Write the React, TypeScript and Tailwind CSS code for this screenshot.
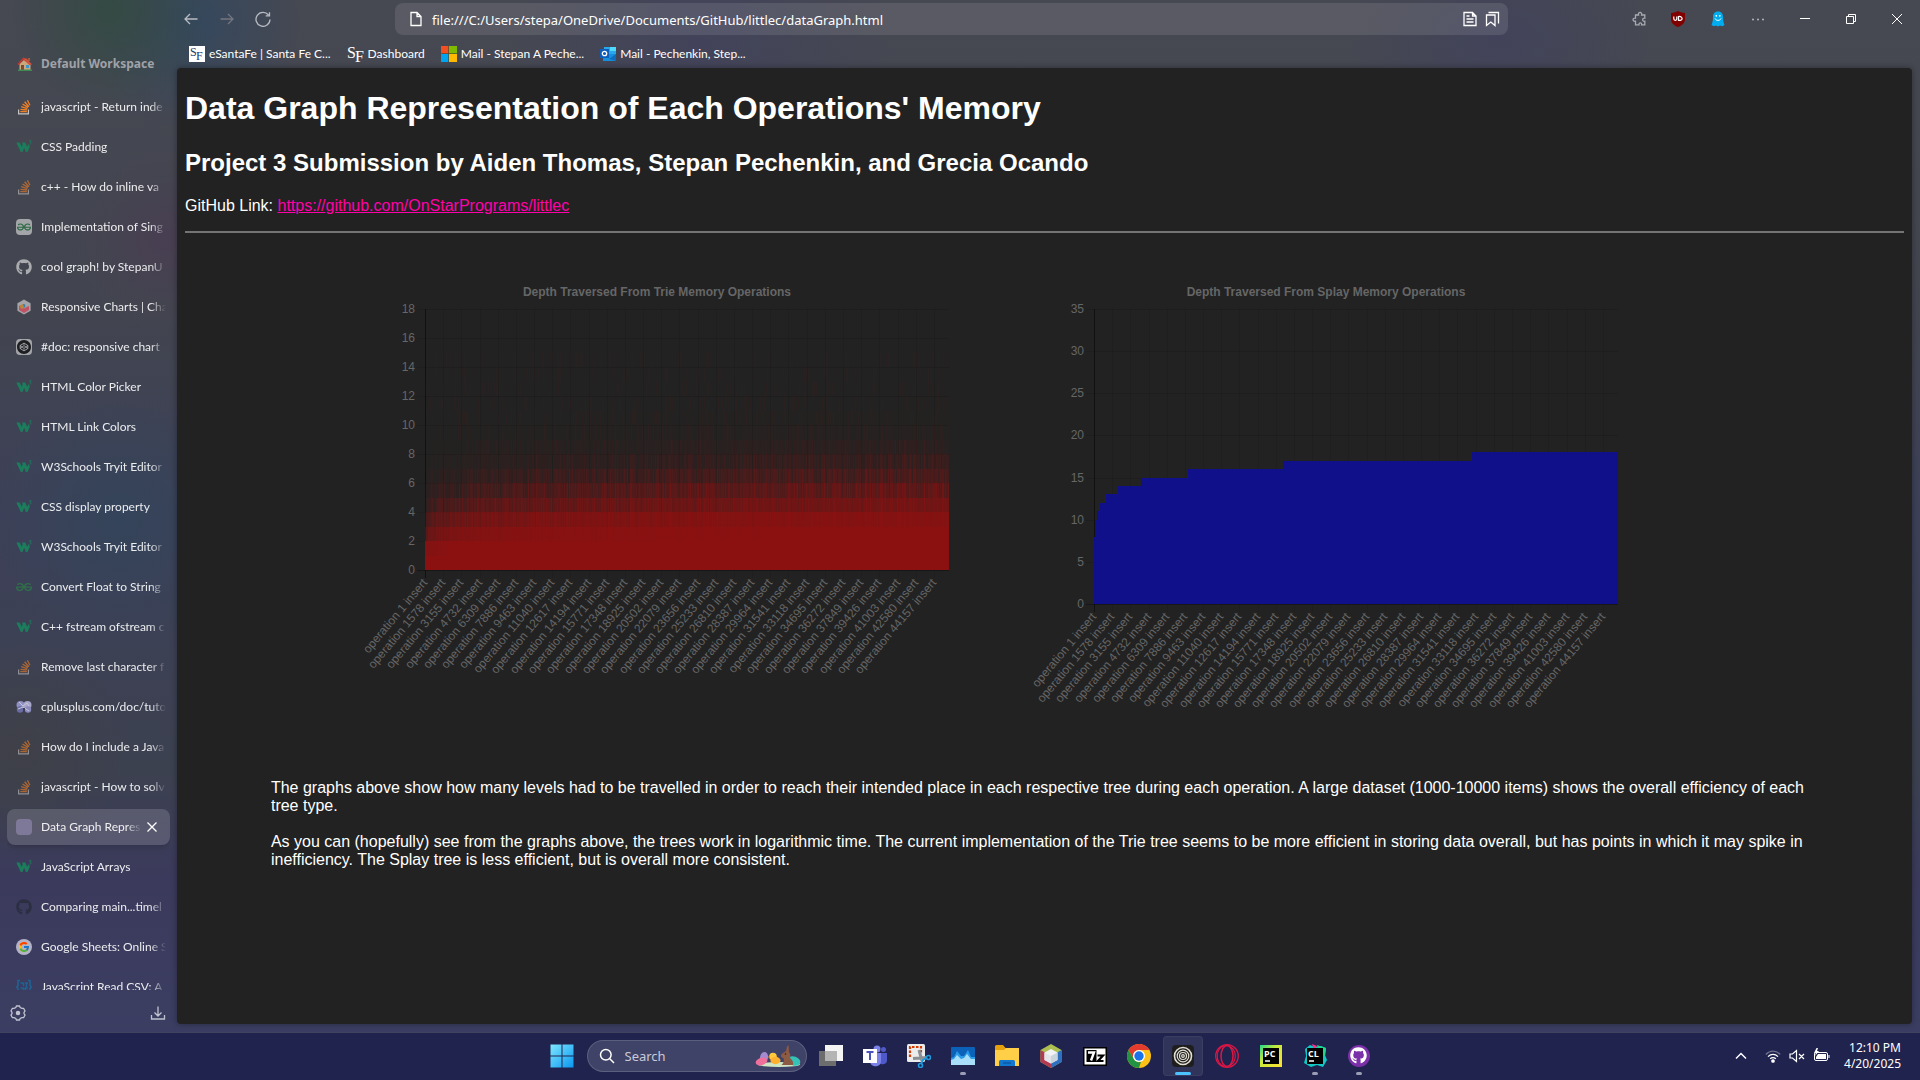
import type { ReactNode } from "react";
import { FaGithub } from "react-icons/fa";
import { FcGoogle } from "react-icons/fc";
import { SiGeeksforgeeks, SiCodepen } from "react-icons/si";

/* ---------- Favicons ---------- */

const Stack = ({ className = "size-4 opacity-60" }: { className?: string }) => (
  <svg viewBox="0 0 16 16" className={className} fill="none">
    <path d="M2.600 10.500v4.300h9.800v-4.300" stroke="#c4c4c4" strokeWidth="1.200" />
    <path
      d="M4.300 12.700h6.500M4.500 10.300l6.400.7M5.200 7.700l6.200 1.900M6.500 5l5.500 3.400M8.600 2.800l4.300 4.900M11.400 1.200l2.500 5"
      stroke="#f48024"
      strokeWidth="1.300"
    />
  </svg>
);

const W3 = () => (
  <svg viewBox="0 0 16 16" className="size-4">
    <path
      d="M.3 3.500h3.500l1.700 4.200 1.200-2.500L6 3.500h3.200l2 4.400 1.300-3 1.300 2.600-2.300 5.500h-1.600L8.200 9l-1.800 4H4.800z"
      fill="#1c7d5c"
    />
    <path d="M13 1.800h2.200l-1 1.500c1.400.2 1.300 2.100-.9 1.800" stroke="#1c7d5c" strokeWidth=".9" fill="none" />
  </svg>
);

const Geeks = () => <SiGeeksforgeeks className="size-4 text-[#2f6e4a]" />;

const GeeksBox = () => (
  <span className="flex size-4 items-center justify-center rounded bg-[#a3a5a8]">
    <SiGeeksforgeeks className="size-3.5 text-[#2c6b45]" />
  </span>
);

const ChartJs = () => (
  <svg viewBox="0 0 16 16" className="size-4">
    <path d="M8 .5l6.600 3.800v7.400L8 15.500l-6.600-3.800V4.300z" fill="#a3a3a8" />
    <path d="M8 14L3 11V7l2-1 3 3.500L10.500 8 13 7v4z" fill="#c05264" />
    <path d="M4 6.500l3-1.500 1 4-2 1-2-1.500z" fill="#b8863c" />
    <path d="M7 5l1.500 0 1 2-1.500 2z" fill="#327ea8" />
  </svg>
);

const Codepen = () => (
  <span className="flex size-4 items-center justify-center rounded bg-[#a3a5a8]">
    <SiCodepen className="size-3.5 text-[#1d1f22]" />
  </span>
);

const Cpp = () => (
  <svg viewBox="0 0 16 16" className="size-4">
    <circle cx="4.500" cy="6" r="4" fill="#8f8fc4" />
    <circle cx="11.500" cy="6" r="4" fill="#a6a4c8" />
    <circle cx="4" cy="10.500" r="3.200" fill="#6a6aa4" />
    <circle cx="12" cy="10.500" r="3.200" fill="#8a8abc" />
    <path d="M3 3l4 4 4-3 2 3M2 10l5-2 6 4" stroke="#c6c6dc" fill="none" />
    <path d="M7 9l2 0 0 4-2 0z" fill="#3d3e52" />
  </svg>
);

const BlankPage = () => <span className="block size-4 rounded bg-[#7e7998]" />;

const Google = () => (
  <span className="flex size-4 items-center justify-center rounded-full bg-[#b4b2c6]">
    <FcGoogle className="size-3" />
  </span>
);

const Csv = () => (
  <svg viewBox="0 0 16 16" className="size-4" fill="none" stroke="#1f6294" strokeWidth="1.600">
    <path d="M4 1.500H2v5L.8 8 2 9.500v5h2M12 1.500h2v5L15.200 8 14 9.500v5h-2M4.500 4h3v3M9 4h3M10.500 4v4M4.500 9h3v3h-3M12 9H9.500v3H12" />
  </svg>
);

const House = () => (
  <svg viewBox="0 0 16 16" className="size-4">
    <path d="M2.500 8v6h11V8L8 3z" fill="#c9a87c" />
    <path d="M1 8.500L6.500 2.500l7 6" stroke="#c0392f" strokeWidth="1.800" fill="none" />
    <path d="M6.500 2.500h3L15 8.500h-3z" fill="#d0543f" />
    <path d="M11 2h2v3h-2z" fill="#a35a3a" />
    <path d="M4 9h3v5H4z" fill="#7d4a35" />
    <path d="M9 9h3v3H9z" fill="#3f95c9" />
    <path d="M1 13.500h14V15H1z" fill="#3f8a52" />
  </svg>
);

/* ---------- Sidebar ---------- */

type Tab = { title: string; icon: ReactNode; active?: boolean };

const tabs: Tab[] = [
  { title: "javascript - Return inde", icon: <Stack className="size-4" /> },
  { title: "CSS Padding", icon: <W3 /> },
  { title: "c++ - How do inline va", icon: <Stack /> },
  { title: "Implementation of Sing", icon: <GeeksBox /> },
  { title: "cool graph! by StepanU", icon: <FaGithub className="size-4 text-[#a9abaf]" /> },
  { title: "Responsive Charts | Cha", icon: <ChartJs /> },
  { title: "#doc: responsive chart", icon: <Codepen /> },
  { title: "HTML Color Picker", icon: <W3 /> },
  { title: "HTML Link Colors", icon: <W3 /> },
  { title: "W3Schools Tryit Editor", icon: <W3 /> },
  { title: "CSS display property", icon: <W3 /> },
  { title: "W3Schools Tryit Editor", icon: <W3 /> },
  { title: "Convert Float to String", icon: <Geeks /> },
  { title: "C++ fstream ofstream c", icon: <W3 /> },
  { title: "Remove last character f", icon: <Stack /> },
  { title: "cplusplus.com/doc/tuto", icon: <Cpp /> },
  { title: "How do I include a Java", icon: <Stack /> },
  { title: "javascript - How to solv", icon: <Stack /> },
  { title: "Data Graph Repres", icon: <BlankPage />, active: true },
  { title: "JavaScript Arrays", icon: <W3 /> },
  { title: "Comparing main...timel", icon: <FaGithub className="size-4 text-[#2c2e42]" /> },
  { title: "Google Sheets: Online S", icon: <Google /> },
  { title: "JavaScript Read CSV: A", icon: <Csv /> },
];

function TabRow({ title, icon, active }: Tab) {
  return (
    <li
      className={
        active
          ? "my-0.5 flex h-9 shrink-0 items-center rounded-lg bg-white/15 pr-3 pl-[9px] shadow-md"
          : "flex h-10 shrink-0 items-center pr-1 pl-[9px]"
      }
    >
      <button className="flex min-w-0 flex-1 items-center gap-[9px] text-left text-white/90">
        <span className="shrink-0">{icon}</span>
        <span className="min-w-0 flex-1 overflow-hidden whitespace-nowrap [mask-image:linear-gradient(to_right,black_calc(100%-16px),transparent)]">
          {title}
        </span>
      </button>
      {active && (
        <button aria-label="Close tab" className="ml-1 shrink-0 text-white">
          <svg viewBox="0 0 12 12" className="size-3" stroke="currentColor" strokeWidth="1.300">
            <path d="M1.500 1.500l9 9M10.500 1.500l-9 9" />
          </svg>
        </button>
      )}
    </li>
  );
}

function Sidebar() {
  return (
    <aside className="flex w-[177px] shrink-0 flex-col overflow-hidden pr-[7px] pl-[7px] font-['Lato','Noto_Sans',sans-serif] text-[12px] leading-4">
      <div className="flex h-[87px] shrink-0 items-end pb-[15px] pl-2.5">
        <h2 className="flex items-center gap-2 font-['Noto_Sans',sans-serif] text-[12px] font-bold whitespace-nowrap text-[#a0a2a8]">
          <House />
          Default Workspace
        </h2>
      </div>
      <ul className="flex min-h-0 flex-1 flex-col overflow-hidden">
        {tabs.map((t, i) => (
          <TabRow key={i} {...t} />
        ))}
      </ul>
      <div className="flex h-[42px] shrink-0 items-start justify-between pt-[15px] pr-1 pl-[3px] text-[#c0c2d0]">
        <button aria-label="Settings">
          <svg viewBox="0 0 16 16" className="size-4" fill="none" stroke="currentColor" strokeWidth="1.300">
            <path d="M5.800 2.500L6.500 1h3l.7 1.500 1.700.9 1.700-.1L15 6l-1 1.400v1.200L15 10l-1.400 2.700-1.700-.1-1.700.9L9.500 15h-3l-.7-1.500-1.700-.9-1.700.1L1 10l1-1.400V7.400L1 6l1.400-2.700 1.700.1z" />
            <circle cx="8" cy="8" r="1.600" fill="currentColor" />
          </svg>
        </button>
        <button aria-label="Downloads">
          <svg viewBox="0 0 16 16" className="size-4" fill="none" stroke="currentColor" strokeWidth="1.300">
            <path d="M8 1.500v9M4.500 7.500L8 11l3.500-3.500M1.500 10v4h13v-4" />
          </svg>
        </button>
      </div>
    </aside>
  );
}

/* ---------- Browser toolbar ---------- */

const Line = ({ d, className }: { d: string; className: string }) => (
  <svg viewBox="0 0 16 16" className={className} fill="none" stroke="currentColor" strokeWidth="1.300">
    <path d={d} />
  </svg>
);

function Toolbar() {
  return (
    <div className="flex h-[38px] items-center pl-1.5 text-white">
      <nav className="flex w-[212px] shrink-0 items-center gap-5 text-[#b9bbc2]">
        <button aria-label="Back">
          <Line d="M7 3L2 8l5 5M2 8h12.500" className="size-4" />
        </button>
        <button aria-label="Forward" className="text-[#74767f]">
          <Line d="M9 3l5 5-5 5M14 8H1.500" className="size-4" />
        </button>
        <button aria-label="Reload">
          <Line d="M13.500 4A7 7 0 1 0 15 8.500M14.500 1.200v3.600h-3.800" className="size-4" />
        </button>
      </nav>
      <div className="flex h-8 min-w-0 flex-1 items-center rounded-lg bg-white/10 pr-2 pl-[13px]">
        <Line d="M3.500 1.500h5.500l4 4v9h-10v-13zM9 1.500v4h4" className="size-4 shrink-0" />
        <input
          aria-label="Address"
          readOnly
          value="file:///C:/Users/stepa/OneDrive/Documents/GitHub/littlec/dataGraph.html"
          className="ml-2 min-w-0 flex-1 bg-transparent pt-0.5 font-['Noto_Sans',sans-serif] text-[13px] leading-5 text-white outline-none"
        />
        <button aria-label="Reader mode">
          <Line d="M2 1.500h8.500l3.500 3.500v9.500H2zM10.500 1.500V5H14M4.500 5h3M4.500 8h7M4.500 11h7" className="size-4" />
        </button>
        <button aria-label="Bookmark" className="ml-1.5">
          <Line d="M4.500 1.500h10v11M2.500 4h8.500v10.500L6.800 11l-4.300 3.500z" className="size-4" />
        </button>
      </div>
      <div className="flex w-[412px] shrink-0 items-center justify-end">
        <div className="flex items-center gap-6">
          <button aria-label="Extensions" className="-mr-0.5 text-[#a9abb2]">
            <Line
              d="M3.500 4h3c-.9-3.500 4-3.500 3.100 0h3.200v3.200c-2.800-.6-2.800 3.700 0 3v3.600h-3.200c.7-2.500-3.200-2.500-2.600 0H3.500v-3.600c-3.300.6-3.300-3.600 0-3z"
              className="size-4"
            />
          </button>
          <button aria-label="uBlock Origin">
            <svg viewBox="0 0 16 16" className="size-4">
              <path d="M8 0c2 1.200 4 1.800 7 2v6c0 4-3 6.500-7 8-4-1.500-7-4-7-8V2c3-.2 5-.8 7-2z" fill="#800000" />
              <path d="M3.800 5.500v2.300c0 2 3 2 3 0V5.500M8.500 5.500v3.900c4.800.7 4.800-4.600 0-3.900z" stroke="white" strokeWidth="1.200" fill="none" />
            </svg>
          </button>
          <button aria-label="Ghostery">
            <svg viewBox="0 0 16 16" className="size-4">
              <path d="M8 .5c3.800 0 5 2.500 5 5.500 0 3 .4 5.500 1.500 8l-2.300 1.300-2.200-.8-2 1-2-1-2.200.8L1.500 14C2.600 11.500 3 9 3 6 3 3 4.200.5 8 .5z" fill="#00aef0" />
              <circle cx="6.300" cy="4.800" r=".9" fill="white" />
              <circle cx="9.800" cy="4.800" r=".9" fill="white" />
              <path d="M5 7.500c1 2.500 5 2.500 6 0" stroke="white" fill="none" />
            </svg>
          </button>
          <button aria-label="More" className="text-[#b5b7be]">
            <svg viewBox="0 0 16 16" className="size-4" fill="currentColor">
              <circle cx="3" cy="8.500" r="1" />
              <circle cx="8" cy="8.500" r="1" />
              <circle cx="13" cy="8.500" r="1" />
            </svg>
          </button>
        </div>
        <div className="mr-[18px] ml-[34px] flex items-center gap-9">
          <button aria-label="Minimize">
            <svg viewBox="0 0 10 10" className="size-2.5" stroke="white">
              <path d="M0 4.500h10" />
            </svg>
          </button>
          <button aria-label="Restore">
            <svg viewBox="0 0 10 10" className="size-2.5" stroke="white" fill="none">
              <path d="M.5 2.500h7v7h-7zM2.500 2.500v-2h7v7h-2" />
            </svg>
          </button>
          <button aria-label="Close window">
            <svg viewBox="0 0 10 10" className="size-2.5" stroke="white">
              <path d="M0 0l10 10M10 0L0 10" />
            </svg>
          </button>
        </div>
      </div>
    </div>
  );
}

const bookmarks: { label: string; icon: ReactNode }[] = [
  {
    label: "eSantaFe | Santa Fe C...",
    icon: (
      <svg viewBox="0 0 16 16" className="size-4" fill="#1b3a6b" fontFamily="Liberation Serif, serif" fontSize="12">
        <path d="M0 0h16v16H0z" fill="white" />
        <text x="1" y="10">S</text>
        <text x="7" y="14">F</text>
      </svg>
    ),
  },
  {
    label: "Dashboard",
    icon: (
      <svg viewBox="0 0 17 16" className="h-4 w-[17px]" fill="white" fontFamily="Liberation Serif, serif" fontSize="16">
        <text x="0" y="12">S</text>
        <text x="8" y="16">F</text>
      </svg>
    ),
  },
  {
    label: "Mail - Stepan A Peche...",
    icon: (
      <svg viewBox="0 0 16 16" className="size-4">
        <path d="M0 0h8v8H0z" fill="#f25022" />
        <path d="M8 0h8v8H8z" fill="#7fba00" />
        <path d="M0 8h8v8H0z" fill="#00a4ef" />
        <path d="M8 8h8v8H8z" fill="#ffb900" />
        <path d="M7.500 0v16M0 7.500h16" stroke="#4a4a30" strokeWidth=".7" />
      </svg>
    ),
  },
  {
    label: "Mail - Pechenkin, Step...",
    icon: (
      <svg viewBox="0 0 16 16" className="size-4">
        <path d="M4 1h12v9H4z" fill="#28a8ea" />
        <path d="M10 1h6v4h-6z" fill="#50d9ff" />
        <path d="M3 8h13v7H3z" fill="#1490df" />
        <path d="M16 8l-7 5 7 2z" fill="#0f6cbd" />
        <path d="M0 3h9v9H0z" fill="#0f5db8" />
        <circle cx="4.500" cy="7.500" r="2.200" fill="none" stroke="white" strokeWidth="1.300" />
      </svg>
    ),
  },
];

function BookmarkBar() {
  return (
    <nav className="flex h-[30px] items-center gap-4 pt-0.5 pl-3 font-['Lato','Noto_Sans',sans-serif] text-[12px] leading-4 text-white">
      {bookmarks.map((b) => (
        <a key={b.label} href="#" className="flex items-center gap-1 whitespace-nowrap">
          {b.icon}
          {b.label}
        </a>
      ))}
    </nav>
  );
}

/* ---------- Charts ---------- */

const OPERATIONS = 45468;
const LABEL_STEP = 1577;
const LEFT = 68;
const TOP = 31;
const PLOT_W = 524;

const labels = Array.from({ length: 29 }, (_, i) => 1 + i * LABEL_STEP);
const xOf = (op: number) => LEFT + (op / OPERATIONS) * PLOT_W;

type ChartProps = { title: string; max: number; step: number; plotHeight: number; children: ReactNode };

function Chart({ title, max, step, plotHeight, children }: ChartProps) {
  const bottom = TOP + plotHeight;
  const ticks = Array.from({ length: max / step + 1 }, (_, i) => i * step);
  return (
    <svg
      viewBox="0 0 600 440"
      role="img"
      aria-label={title}
      className="w-[600px] min-w-0"
      fontFamily="Liberation Sans, Arial, sans-serif"
      fontSize="12"
      fill="#666666"
    >
      <text x="300" y="18" textAnchor="middle" fontWeight="bold">{title}</text>
      {ticks.map((t) => {
        const y = Math.round(bottom - (t / max) * plotHeight);
        return (
          <g key={t}>
            <path d={`M${LEFT - 8} ${y + 0.5}H${LEFT + PLOT_W}`} stroke="black" strokeOpacity={t === 0 ? 0.3 : 0.1} />
            <text x={LEFT - 10} y={y + 4} textAnchor="end">{t}</text>
          </g>
        );
      })}
      {labels.map((n, i) => {
        const x = Math.round(xOf(n));
        return (
          <g key={n}>
            <path d={`M${x + 0.5} ${TOP}V${bottom + 8}`} stroke="black" strokeOpacity={i === 0 ? 0.5 : 0.08} />
            <text transform={`translate(${x + 3} ${bottom + 13}) rotate(-50)`} textAnchor="end">
              {`operation ${n} insert`}
            </text>
          </g>
        );
      })}
      {children}
    </svg>
  );
}

/* Share of operations reaching each depth, drawn as one-pixel columns grouped by opacity. */
function trieBands(plotHeight: number) {
  const unit = plotHeight / 18;
  const bottom = TOP + plotHeight;
  const groups = new Map<number, string>();
  let seed = 7;
  const random = () => {
    seed = (seed * 1103515245 + 12345) % 2147483648;
    return seed / 2147483648;
  };
  for (let px = 0; px < PLOT_W; px++) {
    const typical = 6 + 0.65 * Math.log((px + 1) / PLOT_W);
    const wobble = random() - 0.5;
    for (let level = 0; level < 15; level++) {
      const share = 1 / (1 + Math.exp(0.85 * (level + 0.5 - typical)));
      const spread = 1.4 * share * (1 - share) * Math.min(1, level / 5);
      let alpha = share + spread * (wobble * 0.7 + (random() - 0.5) * 0.6);
      if (level < 2) alpha = Math.max(0.93, alpha + 0.1);
      else if (level < 4) alpha += 0.06;
      if (level === 0) alpha = 1;
      if (level > 7 && random() > 0.85) alpha += 0.06;
      const bucket = Math.round(Math.min(1, Math.max(0, alpha)) * 40);
      if (bucket === 0) continue;
      const y1 = Math.round(bottom - level * unit);
      const y2 = Math.round(bottom - (level + 1) * unit);
      groups.set(bucket, (groups.get(bucket) ?? "") + `M${LEFT + px} ${y1}V${y2}h1V${y1}z`);
    }
  }
  return [...groups.entries()];
}

const TRIE_H = 261;
const SPLAY_H = 295;
const trie = trieBands(TRIE_H);

function splayArea() {
  const unit = SPLAY_H / 35;
  const bottom = TOP + SPLAY_H;
  let d = `M${LEFT} ${bottom}`;
  for (let power = 0; power <= 15; power++) {
    const start = Math.round(xOf(power === 0 ? 0 : 2 ** power));
    const end = Math.round(xOf(Math.min(2 ** (power + 1), OPERATIONS)));
    const y = Math.round(bottom - (power + 3) * unit);
    d += `L${start} ${y}H${end}`;
  }
  return `${d}V${bottom}z`;
}

/* ---------- Page ---------- */

function Page() {
  return (
    <main className="mr-2 min-h-0 flex-1 overflow-hidden rounded bg-[#222222] px-2 font-['Liberation_Sans',Arial,sans-serif] text-[16px] leading-[18px] text-white shadow-[0_0_6px_rgba(0,0,0,0.35)]">
      <h1 className="mt-[22px] text-[32px] leading-9 font-bold">Data Graph Representation of Each Operations' Memory</h1>
      <h2 className="mt-[23px] text-[24px] leading-7 font-bold">
        Project 3 Submission by Aiden Thomas, Stepan Pechenkin, and Grecia Ocando
      </h2>
      <p className="mt-5">
        GitHub Link:{" "}
        <a href="#" className="text-[#ff00aa] underline">
          https://github.com/OnStarPrograms/littlec
        </a>
      </p>
      <hr className="mt-4 border-t-2 border-[#747474]" />
      <div className="mt-[45px] flex items-start gap-[69px] pl-[10%]">
        <Chart title="Depth Traversed From Trie Memory Operations" max={18} step={2} plotHeight={TRIE_H}>
          {trie.map(([bucket, d]) => (
            <path key={bucket} d={d} fill="#8b1111" fillOpacity={bucket / 40} shapeRendering="crispEdges" />
          ))}
        </Chart>
        <Chart title="Depth Traversed From Splay Memory Operations" max={35} step={5} plotHeight={SPLAY_H}>
          <path d={splayArea()} fill="#10108b" shapeRendering="crispEdges" />
        </Chart>
      </div>
      <div className="mx-[5%] mt-[61px] flex flex-col gap-[18px]">
        <p>
          The graphs above show how many levels had to be travelled in order to reach their intended place in each
          respective tree during each operation. A large dataset (1000-10000 items) shows the overall efficiency of each
          tree type.
        </p>
        <p>
          As you can (hopefully) see from the graphs above, the trees work in logarithmic time. The current
          implementation of the Trie tree seems to be more efficient in storing data overall, but has points in which it
          may spike in inefficiency. The Splay tree is less efficient, but is overall more consistent.
        </p>
      </div>
    </main>
  );
}

/* ---------- Taskbar ---------- */

const App24 = ({ children }: { children: ReactNode }) => (
  <svg viewBox="0 0 24 24" className="size-6">
    {children}
  </svg>
);

const apps: { name: string; icon: ReactNode; state?: "open" | "focused" }[] = [
  {
    name: "Task View",
    icon: (
      <App24>
        <path d="M0 7h17v15H0z" fill="#6d6d6d" />
        <path d="M6 1h18v16H6z" fill="#f4f4f4" />
        <path d="M6 7h12v10H6z" fill="#b4b4b4" />
      </App24>
    ),
  },
  {
    name: "Teams",
    icon: (
      <App24>
        <circle cx="14" cy="5" r="3.500" fill="#7b83eb" />
        <circle cx="20.500" cy="5.500" r="2.500" fill="#5059c9" />
        <path d="M16 9h8v7c0 5-6 5-8 3z" fill="#5059c9" />
        <path d="M7 9h11v8c0 7-11 7-11 0z" fill="#7b83eb" />
        <path d="M0 5h14v14H0z" fill="white" />
        <path d="M3.500 8h7M7 8v8" stroke="#4b53bc" strokeWidth="2" />
      </App24>
    ),
  },
  {
    name: "Snipping Tool",
    icon: (
      <App24>
        <rect width="18" height="18" rx="1.500" fill="#ececec" />
        <path d="M3 13V3h11v6" stroke="#d83b01" strokeWidth="2.200" strokeDasharray="2.500 1.500" fill="none" />
        <path d="M12 6l3 11M6 14.500l14-1" stroke="#8a8f94" strokeWidth="3" />
        <circle cx="21.500" cy="13.500" r="2" fill="none" stroke="#1e9ade" strokeWidth="1.600" />
        <circle cx="13.500" cy="21.500" r="2" fill="none" stroke="#1e9ade" strokeWidth="1.600" />
        <path d="M14 20l2-4 4-2" stroke="#1e9ade" strokeWidth="1.800" fill="none" />
      </App24>
    ),
  },
  {
    name: "Task Manager",
    state: "open",
    icon: (
      <App24>
        <rect y="3" width="24" height="18" rx="1" fill="#0b62b8" />
        <path d="M0 14l3-1 3-6 4 5 3 0 4-6 3 7h4v7H0z" fill="#2a9be8" />
        <path d="M0 16l3-1 3-4 4 4 3-1 3-4 4 5h4v6H0z" fill="#a9defb" />
      </App24>
    ),
  },
  {
    name: "File Explorer",
    icon: (
      <App24>
        <path d="M0 2.500Q0 1 1.500 1H8l2.500 3H24v17.500H0z" fill="#e5a00d" />
        <path d="M0 6h9l2-2h13v18H0z" fill="#ffcf48" />
        <path d="M4 22v-4.500Q4 16 5.500 16h13q1.500 0 1.500 1.500V22z" fill="#1177cf" />
        <path d="M8 19h8" stroke="#0b5aa5" strokeWidth="1.500" />
      </App24>
    ),
  },
  {
    name: "NetBeans",
    icon: (
      <App24>
        <path d="M12 0l10.500 6v12L12 24 1.500 18V6z" fill="#aebf52" />
        <path d="M1.500 6L12 12v12L1.500 18z" fill="#b33a53" />
        <path d="M22.500 6L12 12v12l10.500-6z" fill="#2d6fc0" />
        <path d="M12 5l6.500 3.500v7.500L12 19.500 5.500 16V8.500z" fill="#f0f2f4" />
        <path d="M12 12v7.500L18.500 16V8.500z" fill="#c9d4dc" />
        <path d="M12 12L5.500 8.500V16l6.500 3.500z" fill="#e3e5ea" />
      </App24>
    ),
  },
  {
    name: "7-Zip",
    icon: (
      <App24>
        <path d="M0 3h24v19H0z" fill="black" />
        <path d="M1.500 4.500h21v16h-21z" fill="white" />
        <path d="M3.500 6h10v12h-10z" fill="black" />
        <path d="M5 8.500h6L8 16.500" stroke="white" strokeWidth="2.400" fill="none" />
        <path d="M14.500 11.500H20l-5 5.500h5.500" stroke="black" strokeWidth="2.200" fill="none" />
      </App24>
    ),
  },
  {
    name: "Chrome",
    icon: (
      <App24>
        <circle cx="12" cy="12" r="12" fill="#fbc116" />
        <path d="M1.600 6A12 12 0 0 1 22.400 6H12a6 6 0 0 0-5.200 9z" fill="#e33b2e" />
        <path d="M1.600 6l5.200 9A6 6 0 0 0 14 17.700L12 24A12 12 0 0 1 1.600 6z" fill="#229342" />
        <circle cx="12" cy="12" r="6" fill="white" />
        <circle cx="12" cy="12" r="4.700" fill="#1a73e8" />
      </App24>
    ),
  },
  {
    name: "Zen Browser",
    state: "focused",
    icon: (
      <App24>
        <rect x="1" y="1" width="22" height="22" rx="4" fill="#1e1e1e" />
        <g fill="none" stroke="#e2ded2" strokeWidth="1.200">
          <circle cx="12" cy="12" r="8.500" strokeWidth="1.600" />
          <circle cx="12" cy="12" r="5.800" />
          <circle cx="12" cy="12" r="3.500" />
          <circle cx="12" cy="12" r="1.300" />
        </g>
      </App24>
    ),
  },
  {
    name: "Opera GX",
    icon: (
      <App24>
        <g fill="none" stroke="#dc1746">
          <circle cx="12" cy="12" r="11.300" strokeWidth="1.300" />
          <ellipse cx="12" cy="12" rx="6" ry="10.500" strokeWidth="1.500" />
          <path d="M15 2.500c7 4 7 15 0 19M9 1.500c-9 4-9 17 0 21" strokeWidth="1.100" />
        </g>
      </App24>
    ),
  },
  {
    name: "PyCharm",
    icon: (
      <App24>
        <defs>
          <linearGradient id="pc" x1="0" y1="0" x2="1" y2="1">
            <stop offset="0" stopColor="#21d789" />
            <stop offset=".4" stopColor="#c8ea3c" />
            <stop offset="1" stopColor="#fce030" />
          </linearGradient>
        </defs>
        <path d="M1 1h22v22H1z" fill="url(#pc)" />
        <path d="M4 4h16v16H4z" fill="black" />
        <text x="5" y="13" fontSize="9" fontWeight="bold" fill="white" fontFamily="Open Sans, sans-serif">PC</text>
        <path d="M6 17h5" stroke="white" strokeWidth="1.500" />
      </App24>
    ),
  },
  {
    name: "CLion",
    state: "open",
    icon: (
      <App24>
        <path d="M2 5l5-4 5 2 6-1 5 2-1 7 2 5-4 7-6-2-6 2-7-4 2-7z" fill="#12c8c4" />
        <path d="M9 0l5 2-3 4z" fill="#ff318c" />
        <path d="M14 1l9 3-1 8-4-1z" fill="#21d789" />
        <path d="M4 4h16v16H4z" fill="black" />
        <text x="5" y="13" fontSize="9" fontWeight="bold" fill="white" fontFamily="Open Sans, sans-serif">CL</text>
        <path d="M6 17h5" stroke="white" strokeWidth="1.500" />
      </App24>
    ),
  },
  {
    name: "GitHub Desktop",
    state: "open",
    icon: (
      <span className="flex size-[22px] items-center justify-center rounded-full bg-[#7b2fa8]">
        <FaGithub className="size-[17px] text-white" />
      </span>
    ),
  },
];

function EasterArt() {
  return (
    <svg viewBox="0 0 48 24" className="h-6 w-12">
      <ellipse cx="25" cy="20.500" rx="21" ry="2.500" fill="#cfe6c4" />
      <ellipse cx="10" cy="13.500" rx="4" ry="5.500" fill="#a58ad0" transform="rotate(12 10 13.500)" />
      <ellipse cx="7.500" cy="17.500" rx="6" ry="3.700" fill="#f0709c" transform="rotate(-18 7.500 17.500)" />
      <ellipse cx="40" cy="17" rx="6.500" ry="4.500" fill="#35c3b8" transform="rotate(20 40 17)" />
      <circle cx="19" cy="12.500" r="3.800" fill="#ffc83d" />
      <ellipse cx="21.500" cy="16.500" rx="5" ry="3.700" fill="#ffb02e" />
      <path d="M13.500 13l2-1v2z" fill="#e8702a" />
      <path d="M27.500 21c2-2 3-4 2-7-3-.5-3.500-3-.5-5L32 7l1-4.500 1.500-1.500.5 7c1.500 2 1.500 4 1 6 3 2 3.500 5 3 7z" fill="#8d5a43" />
      <circle cx="31.500" cy="10" r=".7" fill="#2c1a12" />
    </svg>
  );
}

function Taskbar() {
  return (
    <footer className="grid h-12 shrink-0 grid-cols-[1fr_auto_1fr] items-center border-t border-[#40425f] bg-[#1f234e] pb-0.5 font-['Noto_Sans',sans-serif] text-white">
      <span />
      <div className="flex items-center">
        <button aria-label="Start" className="flex h-10 w-11 items-center justify-center">
          <svg viewBox="0 0 24 24" className="size-6">
            <defs>
              <linearGradient id="win" x1="0" y1="0" x2="1" y2="1">
                <stop offset="0" stopColor="#7fe8ff" />
                <stop offset="1" stopColor="#0a96f0" />
              </linearGradient>
            </defs>
            <path d="M.5.5h11v11H.5zM12.500.5h11v11h-11zM.5 12.500h11v11H.5zM12.500 12.500h11v11h-11z" fill="url(#win)" />
          </svg>
        </button>
        <label className="mr-[2px] ml-[3px] flex h-8 w-[220px] items-center rounded-full border border-white/15 bg-white/15 pr-1 pl-[11px]">
          <svg viewBox="0 0 16 16" className="size-4 shrink-0" fill="none" stroke="white" strokeWidth="1.500">
            <circle cx="6.800" cy="6.800" r="5.300" />
            <path d="M10.800 10.800L15 15" />
          </svg>
          <input
            placeholder="Search"
            aria-label="Search"
            className="ml-2.5 w-0 min-w-0 flex-1 bg-transparent text-[13px] leading-5 outline-none placeholder:text-[#c8cad8]"
          />
          <EasterArt />
        </label>
        {apps.map((a) => (
          <button
            key={a.name}
            aria-label={a.name}
            className="flex w-11 items-center justify-center"
          >
            <span
              className={
                a.state === "focused"
                  ? "relative flex size-10 items-center justify-center rounded bg-white/8 ring-1 ring-white/5 ring-inset"
                  : "relative flex size-10 items-center justify-center"
              }
            >
              {a.icon}
              {a.state === "open" && <span className="absolute bottom-px h-[3px] w-1.5 rounded-full bg-[#9b9db3]" />}
              {a.state === "focused" && <span className="absolute bottom-px h-[3px] w-4 rounded-full bg-[#4cc2ff]" />}
            </span>
          </button>
        ))}
      </div>
      <div className="flex items-center justify-end pr-[19px]">
        <button aria-label="Show hidden icons" className="mr-[18px]">
          <svg viewBox="0 0 12 12" className="size-3" fill="none" stroke="white" strokeWidth="1.500">
            <path d="M1 8.500l5-5 5 5" />
          </svg>
        </button>
        <button aria-label="Network, sound and battery" className="flex items-center gap-2">
          <svg viewBox="0 0 16 16" className="size-4" fill="none" stroke="white" strokeWidth="1.300">
            <path d="M.8 6.500c4-4.500 10.400-4.500 14.400 0" strokeOpacity=".35" />
            <path d="M3 8.600c3-3 7-3 10 0M5.200 10.800c1.700-1.700 3.900-1.700 5.600 0" />
            <circle cx="8" cy="13" r="1.200" fill="white" />
          </svg>
          <svg viewBox="0 0 16 16" className="size-4" fill="none" stroke="white" strokeWidth="1.200">
            <path d="M1 6h2.500L7.500 2.500v11L3.500 10H1zM10 6l5 5M15 6l-5 5" />
          </svg>
          <svg viewBox="0 0 17 16" className="h-4 w-[17px]">
            <rect x="1.500" y="4.500" width="13" height="8" rx="1.500" fill="none" stroke="white" />
            <path d="M5 6h8v5H3V9z" fill="white" />
            <path d="M15.500 7h1v3h-1z" fill="white" />
            <path d="M3.500 0L1 5h2L2 8l4-5H4l1-3z" fill="white" />
          </svg>
        </button>
        <button className="ml-3.5 text-right text-[12px] leading-4">
          <span className="block">12:10 PM</span>
          <span className="block">4/20/2025</span>
        </button>
      </div>
    </footer>
  );
}

export default function App() {
  return (
    <div className="flex h-screen flex-col overflow-hidden bg-[#42454f]">
      <div className="flex min-h-0 flex-1 bg-[radial-gradient(circle_at_110px_10px,#344a43_0,transparent_100px),radial-gradient(circle_at_190px_20px,#34485e_0,transparent_110px),radial-gradient(circle_at_120px_520px,#34445a_0,transparent_130px),radial-gradient(circle_at_165px_240px,#483f52_0,transparent_90px),radial-gradient(circle_at_20px_750px,#3f4048_0,transparent_110px),radial-gradient(ellipse_at_700px_40px,#42435a_0,transparent_190px),radial-gradient(ellipse_at_1500px_40px,#42435a_0,transparent_150px),linear-gradient(to_bottom,#464852_0,#42454f_30%,#3d4058_50%,#3c4150_75%,#3b3a5c_85%,#3b3e62_100%)]">
        <Sidebar />
        <div className="flex min-w-0 flex-1 flex-col pb-2">
          <header>
            <Toolbar />
            <BookmarkBar />
          </header>
          <Page />
        </div>
      </div>
      <Taskbar />
    </div>
  );
}
